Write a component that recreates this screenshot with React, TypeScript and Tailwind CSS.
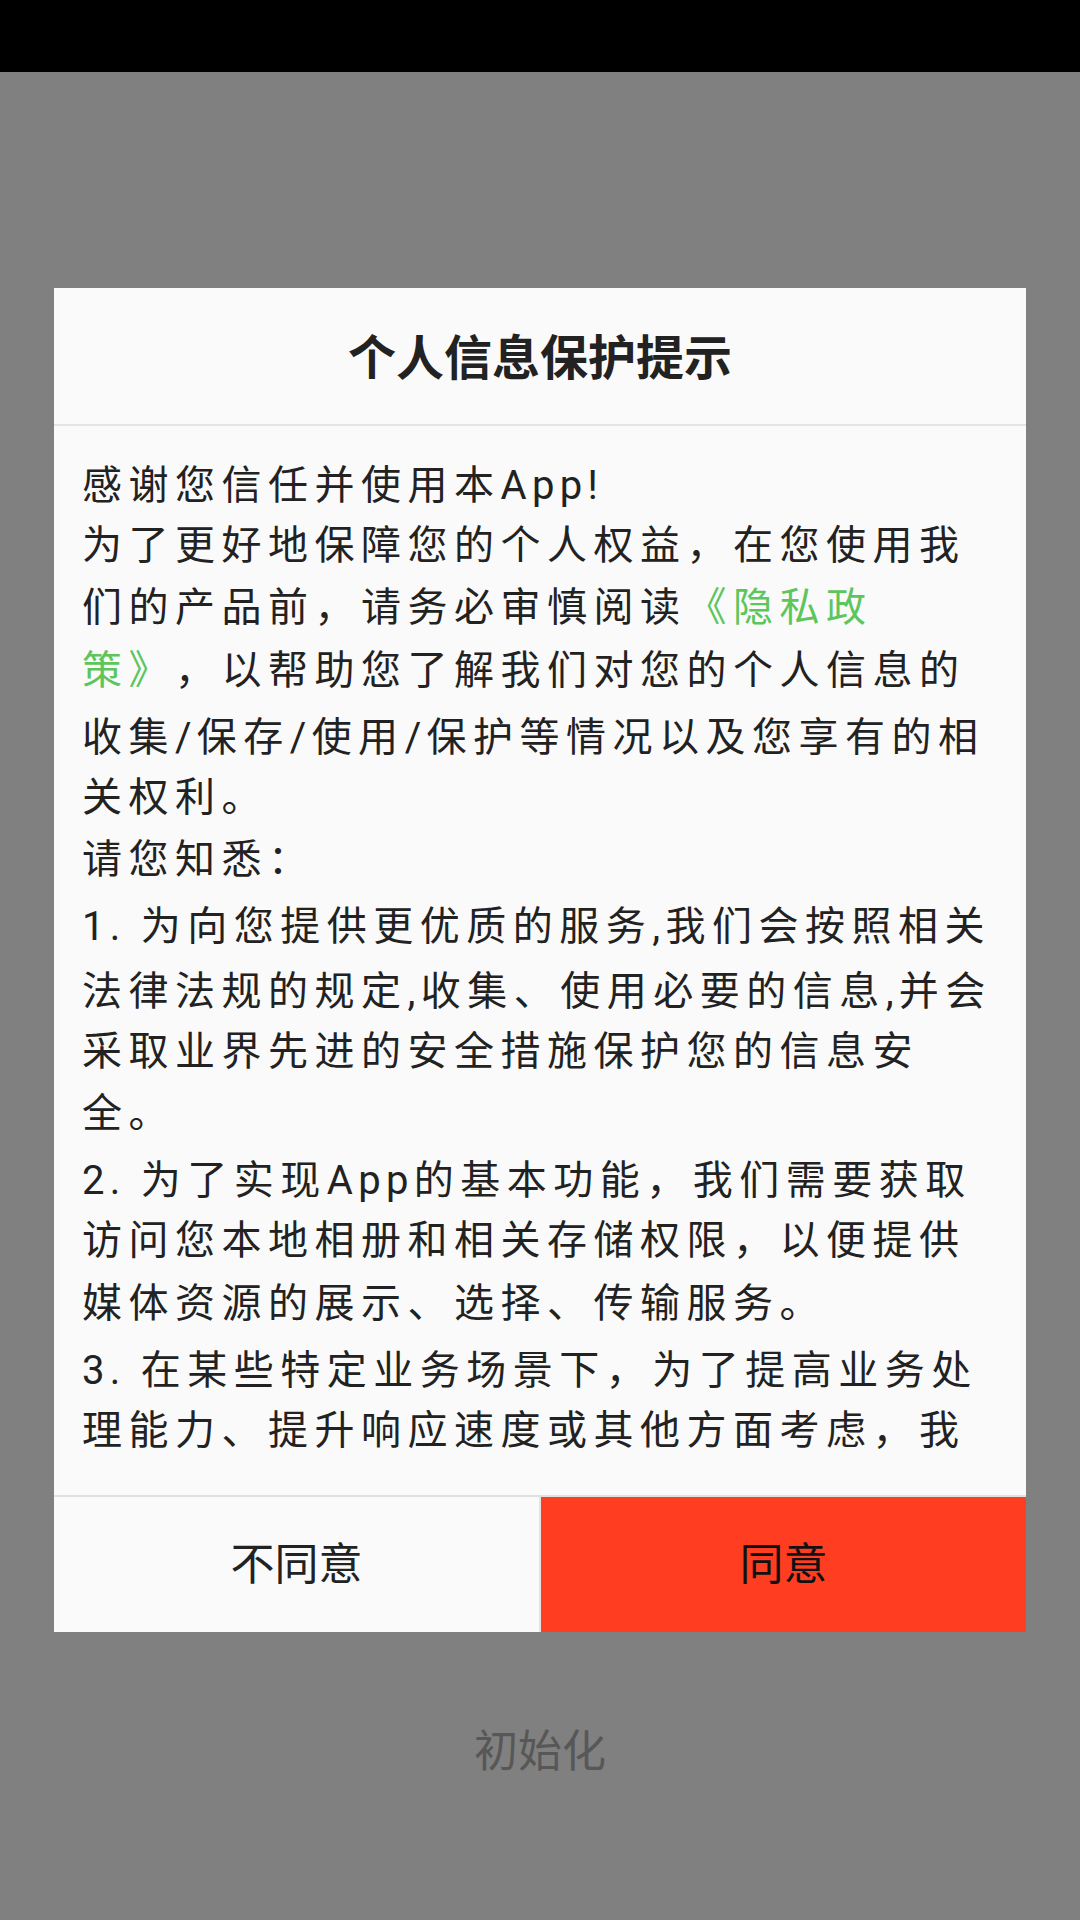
import React from "react";

type Seg = { t: string; g?: boolean };
type Line = { segs: Seg[]; latin?: boolean };

const lines: Line[] = [
  { segs: [{ t: "感谢您信任并使用本App!" }], latin: true },
  { segs: [{ t: "为了更好地保障您的个人权益，在您使用我" }] },
  { segs: [{ t: "们的产品前，请务必审慎阅读" }, { t: "《隐私政", g: true }] },
  { segs: [{ t: "策》", g: true }, { t: "，以帮助您了解我们对您的个人信息的" }] },
  { segs: [{ t: "收集/保存/使用/保护等情况以及您享有的相" }], latin: true },
  { segs: [{ t: "关权利。" }] },
  { segs: [{ t: "请您知悉：" }] },
  { segs: [{ t: "1. 为向您提供更优质的服务,我们会按照相关" }], latin: true },
  { segs: [{ t: "法律法规的规定,收集、使用必要的信息,并会" }], latin: true },
  { segs: [{ t: "采取业界先进的安全措施保护您的信息安" }] },
  { segs: [{ t: "全。" }] },
  { segs: [{ t: "2. 为了实现App的基本功能，我们需要获取" }], latin: true },
  { segs: [{ t: "访问您本地相册和相关存储权限，以便提供" }] },
  { segs: [{ t: "媒体资源的展示、选择、传输服务。" }] },
  { segs: [{ t: "3. 在某些特定业务场景下，为了提高业务处" }], latin: true },
  { segs: [{ t: "理能力、提升响应速度或其他方面考虑，我" }] },
];

function runs(text: string): { t: string; ascii: boolean }[] {
  const out: { t: string; ascii: boolean }[] = [];
  for (const ch of text) {
    const ascii = ch.charCodeAt(0) < 128;
    const last = out[out.length - 1];
    if (last && last.ascii === ascii) last.t += ch;
    else out.push({ t: ch, ascii });
  }
  return out;
}

export default function App() {
  return (
    <div className="w-[1080px] h-[1920px] bg-[#808080] flex flex-col font-['Roboto','Noto_Sans_CJK_SC',sans-serif] overflow-hidden">
      <div className="h-[72px] bg-black shrink-0" />
      <div className="mt-[216px] mx-[54px] w-[972px] bg-[#fafafa] flex flex-col shrink-0">
        <div className="h-[136px] flex items-center justify-center pt-[6px] text-[48px] font-bold text-[#222222]">
          个人信息保护提示
        </div>
        <div className="h-[2px] bg-[#e4e4e4]" />
        <div className="h-[1069px] flex flex-col px-[28px] pt-[24px]">
          <div className="h-[1012px] overflow-hidden text-[40px] text-[#222222] whitespace-nowrap [text-spacing-trim:space-all] [font-kerning:none]">
            {lines.map((l, i) => (
              <div
                key={i}
                className={
                  l.latin
                    ? "h-[64.5px] pt-[4.5px] leading-[62.5px]"
                    : "h-[62.5px] leading-[62.5px]"
                }
              >
                {l.segs.map((s, j) => (
                  <span key={j} className={s.g ? "text-[#5cc65c]" : ""}>
                    {runs(s.t).map((r, k) => (
                      <span
                        key={k}
                        className={r.ascii ? "tracking-[5.3px]" : "tracking-[6.5px]"}
                      >
                        {r.t}
                      </span>
                    ))}
                  </span>
                ))}
              </div>
            ))}
          </div>
        </div>
        <div className="h-[2px] bg-[#e0e0e0]" />
        <div className="h-[135px] flex">
          <button className="w-[485px] h-full bg-[#fafafa] flex items-center justify-center text-[44px] text-[#222222]">
            不同意
          </button>
          <div className="w-[2px] h-full bg-[#e4e4e4]" />
          <button className="w-[485px] h-full bg-[#ff3d21] flex items-center justify-center text-[44px] text-[#111111]">
            同意
          </button>
        </div>
      </div>
      <div className="mt-[94px] h-[52px] leading-[52px] text-center text-[44px] text-[#575757]">
        初始化
      </div>
    </div>
  );
}
